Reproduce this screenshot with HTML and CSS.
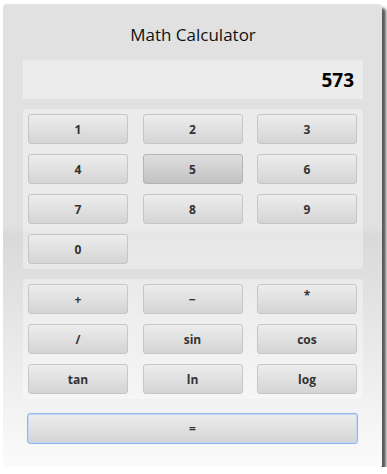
FILE: index.html
```html
<!DOCTYPE html>
<html lang="en">
<head>
    <meta charset="UTF-8">
    <title>Math Calculator</title>
    <link rel="stylesheet" href="styles.css">
</head>
<body>
    <div class="window">
        <h1 class="title">Math Calculator</h1>

        <div class="display">573</div>

        <div class="pad">
            <button class="key">1</button>
            <button class="key">2</button>
            <button class="key">3</button>
            <button class="key">4</button>
            <button class="key hover">5</button>
            <button class="key">6</button>
            <button class="key">7</button>
            <button class="key">8</button>
            <button class="key">9</button>
            <button class="key">0</button>
        </div>

        <div class="pad">
            <button class="key">+</button>
            <button class="key">&minus;</button>
            <button class="key star">*</button>
            <button class="key">/</button>
            <button class="key">sin</button>
            <button class="key">cos</button>
            <button class="key">tan</button>
            <button class="key">ln</button>
            <button class="key">log</button>
        </div>

        <button class="key equals">=</button>
    </div>
</body>
</html>
```

FILE: styles.css
```css
body {
    margin: 0;
    background-color: #ffffff;
    font-family: "Open Sans", "DejaVu Sans", sans-serif;
}

.window {
    box-sizing: border-box;
    width: 379px;
    height: 463px;
    margin: 4px 0 0 3px;
    padding: 0 19px 0 20px;
    border-radius: 4px 4px 2px 2px;
    background: linear-gradient(#e1e1e1 0%, #e1e1e1 48%, #d9d9d9 50%, #fbfbfb 100%);
    box-shadow: 4px 4px 3px rgba(0, 0, 0, 0.65);
}

.title {
    margin: 0 0 12px;
    padding-top: 18px;
    line-height: 26px;
    font-size: 17px;
    font-weight: normal;
    text-align: center;
    color: #111;
}

.display {
    height: 39px;
    padding-right: 9px;
    margin-bottom: 10px;
    background-color: #ececec;
    font-size: 19px;
    font-weight: bold;
    line-height: 41px;
    text-align: right;
    color: #000;
}

.pad {
    display: grid;
    grid-template-columns: repeat(3, 100px);
    gap: 10px 14.5px;
    padding: 5px 6px 5px 5px;
    margin-bottom: 10px;
    border-radius: 4px;
    background-color: rgba(255, 255, 255, 0.35);
}

.key {
    box-sizing: border-box;
    height: 30px;
    padding: 0;
    border: 1px solid #c6c6c6;
    border-radius: 3px;
    background: linear-gradient(#ededed, #d4d4d4);
    font-family: "Open Sans", "DejaVu Sans", sans-serif;
    font-size: 12px;
    font-weight: bold;
    color: #333;
}

.key.hover {
    border-color: #b4b4b4;
    background: linear-gradient(#dedede, #c2c2c2);
}

.key.star {
    line-height: 20px;
    vertical-align: top;
    padding-bottom: 6px;
}

.equals {
    display: block;
    width: 331px;
    height: 31px;
    margin: 14px 0 0 4px;
    border: 1px solid #8fb4ee;
    box-shadow: inset 0 0 0 1px #c6d8f5;
}
```
